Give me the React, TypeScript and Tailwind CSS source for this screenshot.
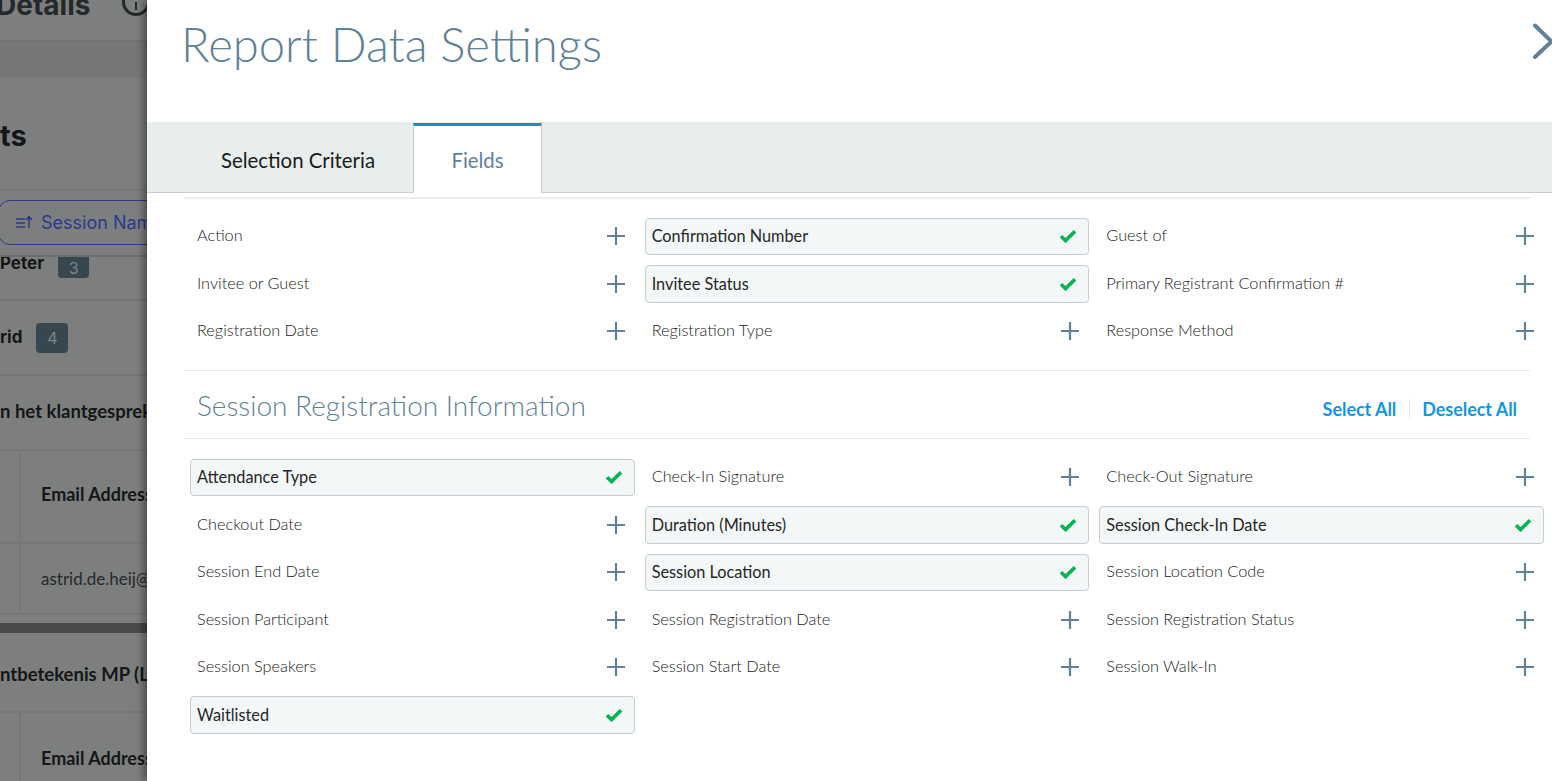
const lato = "font-['Lato','Liberation_Sans',sans-serif]";

type Field = { label: string; on?: boolean };

const REGISTRATION: Field[] = [
  { label: "Action" },
  { label: "Confirmation Number", on: true },
  { label: "Guest of" },
  { label: "Invitee or Guest" },
  { label: "Invitee Status", on: true },
  { label: "Primary Registrant Confirmation #" },
  { label: "Registration Date" },
  { label: "Registration Type" },
  { label: "Response Method" },
];

const SESSION: Field[] = [
  { label: "Attendance Type", on: true },
  { label: "Check-In Signature" },
  { label: "Check-Out Signature" },
  { label: "Checkout Date" },
  { label: "Duration (Minutes)", on: true },
  { label: "Session Check-In Date", on: true },
  { label: "Session End Date" },
  { label: "Session Location", on: true },
  { label: "Session Location Code" },
  { label: "Session Participant" },
  { label: "Session Registration Date" },
  { label: "Session Registration Status" },
  { label: "Session Speakers" },
  { label: "Session Start Date" },
  { label: "Session Walk-In" },
  { label: "Waitlisted", on: true },
];

function PlusIcon() {
  return (
    <svg width="18" height="18" viewBox="0 0 18 18" className="shrink-0">
      <path d="M9 0.5v17M0.5 9h17" stroke="#5f8296" strokeWidth="2.2" strokeLinecap="round" />
    </svg>
  );
}

function CheckIcon() {
  return (
    <svg width="18" height="14" viewBox="0 0 18 14" className="shrink-0">
      <path d="M2 7.2l4.6 4.4L16 2.2" fill="none" stroke="#00b64f" strokeWidth="3.6" />
    </svg>
  );
}

function FieldCell({ label, on }: Field) {
  return (
    <div
      className={`flex items-center justify-between rounded-[4px] border pl-[6px] text-[16.3px] ${
        on
          ? "border-[#c6ced3] bg-[#f3f7f8] pr-[11px] text-[#262626]"
          : "border-transparent pr-[9px] font-light text-[#222]"
      }`}
    >
      <span className={on ? "" : "-mt-[2px]"}>{label}</span>
      {on ? <CheckIcon /> : <PlusIcon />}
    </div>
  );
}

function FieldGrid({ fields }: { fields: Field[] }) {
  return (
    <div className="-mr-[14px] ml-[6px] grid grid-cols-3 auto-rows-[37.5px] gap-x-[10px] gap-y-[10px]">
      {fields.map((f) => (
        <FieldCell key={f.label} {...f} />
      ))}
    </div>
  );
}

function Backdrop() {
  return (
    <div className="h-full w-[147px] shrink-0 overflow-hidden bg-[#7d7f7f] font-['Inter',sans-serif] text-[#141617]">
      <div className="flex h-[42px] items-start overflow-hidden border-b-2 border-[#707272]">
        <span className="-ml-[4px] -mt-[13px] text-[28px] font-bold leading-[36px] text-[#26292b]">Details</span>
        <span className="-mt-[12px] ml-[32px] flex h-[28px] w-[28px] shrink-0 flex-col items-center justify-end gap-[2px] rounded-full border-[3px] border-[#26292b] pb-[3px]">
          <span className="h-[2px] w-[2px] bg-[#26292b]" />
          <span className="h-[8px] w-[2px] bg-[#26292b]" />
        </span>
      </div>
      <div className="h-[36px] bg-[#767878]" />
      <div className="flex h-[113px] items-center border-b-2 border-[#767878] pt-[4px] text-[29px] font-bold">ts</div>
      <div className="flex h-[66px] items-center border-b-2 border-[#6c6e6e] pb-[2px]">
        <div className="-ml-[2px] flex h-[45px] w-[200px] shrink-0 items-center gap-[8px] rounded-[12px] border border-[#2b3a8c] pl-[17px] text-[18px] whitespace-nowrap text-[#2b3a8c]">
          <svg width="17" height="14" viewBox="0 0 17 14" className="shrink-0">
            <path d="M0 4h9M0 8h9M0 12h9M13 13V2M10 5l3-3.5L16 5" fill="none" stroke="#2b3a8c" strokeWidth="1.5" />
          </svg>
          Session Name
        </div>
      </div>
      <div className="flex h-[44px] items-start gap-[14px] overflow-hidden border-b-2 border-[#747676]">
        <span className="-mt-[6px] text-[17px] leading-[24px] font-bold">Peter</span>
        <span className="flex h-[21px] w-[31px] items-end justify-center rounded-b-[4px] bg-[#37474f] text-[16px] leading-[20px] text-[#76878f]">3</span>
      </div>
      <div className="flex h-[75px] items-center gap-[14px] border-b-2 border-[#747676]">
        <span className="text-[17px] font-bold">rid</span>
        <span className="flex h-[30px] w-[32px] items-center justify-center rounded-[4px] bg-[#37474f] text-[16px] text-[#76878f]">4</span>
      </div>
      <div className="flex h-[75px] items-center border-b-2 border-[#767878] pb-[2px] whitespace-nowrap font-['Lato',sans-serif] text-[18.5px] font-bold">
        n het klantgesprek
      </div>
      <div className="flex h-[93px] items-center border-b-2 border-[#767878]">
        <span className="h-full w-[21px] shrink-0 border-r-2 border-[#767878]" />
        <span className="-mt-[5px] pl-[20px] font-['Lato',sans-serif] text-[18px] font-bold whitespace-nowrap">Email Address</span>
      </div>
      <div className="flex h-[71px] items-center border-b-2 border-[#767878]">
        <span className="h-full w-[21px] shrink-0 border-r-2 border-[#767878]" />
        <span className="pl-[20px] font-['Lato',sans-serif] text-[17px] whitespace-nowrap text-[#26292b]">astrid.de.heij@</span>
      </div>
      <div className="h-[8px]" />
      <div className="h-[10px] bg-[#4a4a4a]" />
      <div className="flex h-[80px] items-center border-b-2 border-[#767878] pt-[5px] whitespace-nowrap font-['Lato',sans-serif] text-[18.5px] font-bold">
        ntbetekenis MP (Lo
      </div>
      <div className="flex h-[92px] items-center">
        <span className="h-full w-[21px] shrink-0 border-r-2 border-[#767878]" />
        <span className="-mt-[2px] pl-[20px] font-['Lato',sans-serif] text-[18px] font-bold whitespace-nowrap">Email Address</span>
      </div>
    </div>
  );
}

export default function App() {
  return (
    <div className="flex h-[781px] w-[1552px] overflow-hidden">
      <Backdrop />
      <div className={`relative flex h-full min-w-0 flex-1 flex-col overflow-hidden bg-white shadow-[-3px_0_8px_rgba(0,0,0,0.45)] ${lato}`}>
        <header className="flex h-[122px] shrink-0 items-start justify-between pl-[34px]">
          <h1 className="mt-[15px] text-[47.2px] leading-[58px] font-light text-[#5f8296]">Report Data Settings</h1>
          <svg width="20" height="36" viewBox="0 0 20 36" className="mt-[23px] shrink-0">
            <path d="M3 2.5L19.5 18.5L3 34" fill="none" stroke="#5f8296" strokeWidth="4" strokeLinecap="round" />
          </svg>
        </header>

        <div className="flex h-[71px] shrink-0 border-b border-[#c8d0d5] bg-[#e8eded] text-[20.4px]">
          <div className="flex w-[266px] items-center justify-center pt-[6px] pl-[36px] text-[#1b1b1b]">Selection Criteria</div>
          <div className="mt-px -mb-px flex w-[129px] items-center justify-center border-x border-t-[3px] border-x-[#c8d0d5] border-t-[#1a8ccf] bg-white pt-[1px] text-[#5f8296]">
            Fields
          </div>
        </div>

        <div className="flex-1 pt-[4px] pl-[37px] pr-[22px]">
          <div className="border-t-2 border-[#eeeeee] pt-[18.5px]">
            <FieldGrid fields={REGISTRATION} />
          </div>
          <div className="mt-[19.5px] flex h-[69px] items-center justify-between border-y border-[#e8e8e8] pr-[13px]">
            <h2 className="mt-[1px] ml-[13px] text-[28px] leading-none font-light text-[#5f8296]">Session Registration Information</h2>
            <div className="mt-[10px] flex items-center text-[18px] font-bold tracking-[-0.05px] text-[#0f97e6]">
              <span>Select All</span>
              <span className="mx-[12.5px] h-[20px] w-px bg-[#e4e8ea]" />
              <span>Deselect All</span>
            </div>
          </div>
          <div className="pt-[20px]">
            <FieldGrid fields={SESSION} />
          </div>
        </div>
      </div>
    </div>
  );
}
